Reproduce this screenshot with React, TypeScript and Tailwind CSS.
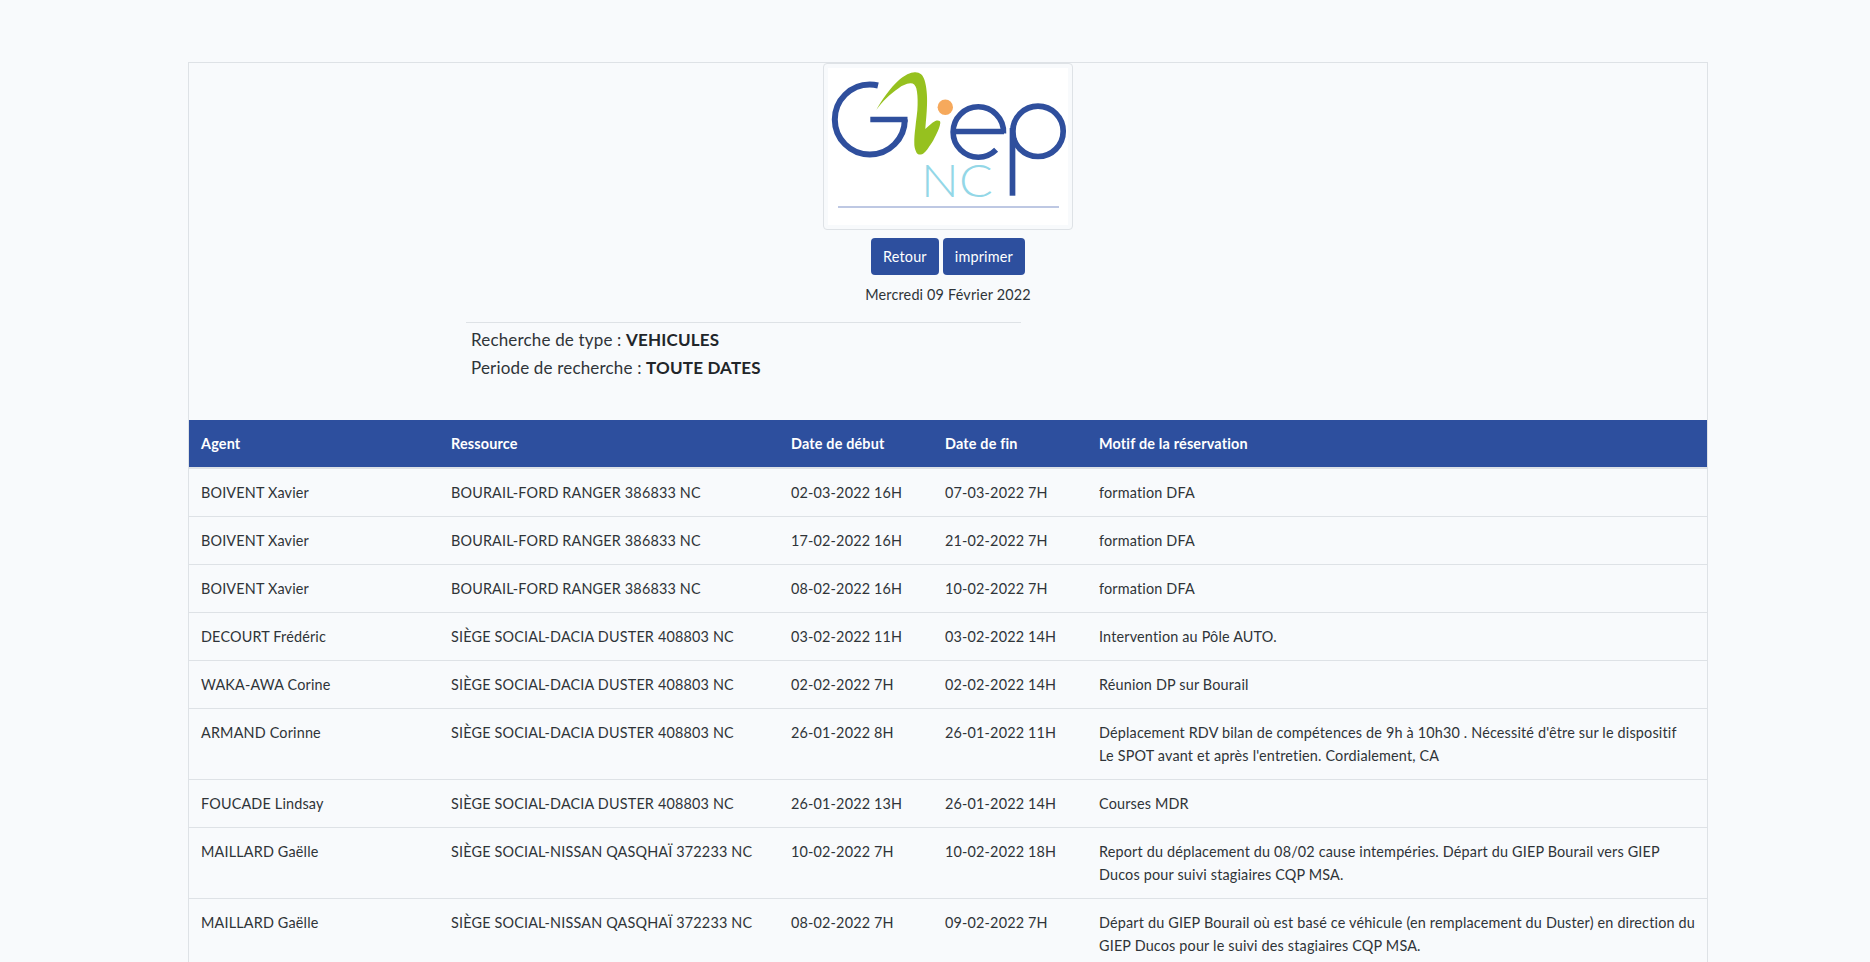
const rows = [
  { agent: "BOIVENT Xavier", res: "BOURAIL-FORD RANGER 386833 NC", start: "02-03-2022 16H", end: "07-03-2022 7H", motif: "formation DFA" },
  { agent: "BOIVENT Xavier", res: "BOURAIL-FORD RANGER 386833 NC", start: "17-02-2022 16H", end: "21-02-2022 7H", motif: "formation DFA" },
  { agent: "BOIVENT Xavier", res: "BOURAIL-FORD RANGER 386833 NC", start: "08-02-2022 16H", end: "10-02-2022 7H", motif: "formation DFA" },
  { agent: "DECOURT Frédéric", res: "SIÈGE SOCIAL-DACIA DUSTER 408803 NC", start: "03-02-2022 11H", end: "03-02-2022 14H", motif: "Intervention au Pôle AUTO." },
  { agent: "WAKA-AWA Corine", res: "SIÈGE SOCIAL-DACIA DUSTER 408803 NC", start: "02-02-2022 7H", end: "02-02-2022 14H", motif: "Réunion DP sur Bourail" },
  { agent: "ARMAND Corinne", res: "SIÈGE SOCIAL-DACIA DUSTER 408803 NC", start: "26-01-2022 8H", end: "26-01-2022 11H", motif: "Déplacement RDV bilan de compétences de 9h à 10h30 . Nécessité d'être sur le dispositif Le\u00a0SPOT avant et après l'entretien. Cordialement, CA" },
  { agent: "FOUCADE Lindsay", res: "SIÈGE SOCIAL-DACIA DUSTER 408803 NC", start: "26-01-2022 13H", end: "26-01-2022 14H", motif: "Courses MDR" },
  { agent: "MAILLARD Gaëlle", res: "SIÈGE SOCIAL-NISSAN QASQHAÏ 372233 NC", start: "10-02-2022 7H", end: "10-02-2022 18H", motif: "Report du déplacement du 08/02 cause intempéries. Départ du GIEP Bourail vers GIEP Ducos pour suivi stagiaires CQP MSA." },
  { agent: "MAILLARD Gaëlle", res: "SIÈGE SOCIAL-NISSAN QASQHAÏ 372233 NC", start: "08-02-2022 7H", end: "09-02-2022 7H", motif: "Départ du GIEP Bourail où est basé ce véhicule (en remplacement du Duster) en direction du GIEP Ducos pour le suivi des stagiaires CQP MSA." },
];

function Logo() {
  return (
    <svg width="240" height="157" viewBox="0 0 240 157" className="block bg-white" role="img" aria-label="GIEP NC">
      <g fill="none" stroke="#2f4f9d">
        {/* G */}
        <circle cx="41.8" cy="51.5" r="35" strokeWidth="6" strokeDasharray="173 220" />
        <line x1="42.3" y1="51.5" x2="79.5" y2="51.5" strokeWidth="5.6" />
        {/* e */}
        <circle cx="150.3" cy="64" r="25.2" strokeWidth="5.6" strokeDasharray="139 159" transform="rotate(45 150.3 64)" />
        <line x1="125" y1="63.5" x2="176" y2="63.5" strokeWidth="5.6" />
        {/* p */}
        <circle cx="210" cy="63.3" r="25.2" strokeWidth="5.7" />
        <line x1="184.5" y1="60" x2="184.5" y2="127.7" strokeWidth="5.7" />
      </g>
      <path
        d="M48.3 42 C53 33 62 20 71 12 C77 7 83 4 87.3 4.3 C92 4.5 95 7 96.5 12 C98.5 18 99.5 28 99 37 C98.8 45 98 52 97.3 61 C100 58.5 104 54.5 107.3 53 C110 52 112.6 52.5 112.3 55 C111.8 58.5 110.5 62 108 67 C106 71 104.5 74 102.3 77 C100 80.5 97 85 94 86.3 C91.5 87 89.2 86.5 88.3 84.3 C86.8 81 86.2 78 86.3 75.3 C86.2 70 86.7 65 87.3 60.3 C88 52 89.6 44 89.6 37 C89.8 30 89.4 25 88.3 20.3 C87.4 17 85 15 82.3 15.3 C78 15.8 74 17.5 70.6 20.3 C62 26 54 34 48.3 42 Z"
        fill="#96c11f"
      />
      <circle cx="117.3" cy="39.3" r="7.7" fill="#f6a95c" />
      <text x="93" y="128.5" fontFamily="Lato, sans-serif" fontWeight="300" fontSize="45.6" textLength="72" lengthAdjust="spacingAndGlyphs" fill="#93d7e7">
        NC
      </text>
      <line x1="10" y1="139" x2="231" y2="139" stroke="#a9b6da" strokeWidth="1.3" />
    </svg>
  );
}

export default function App() {
  return (
    <div className="h-[962px] overflow-hidden bg-[#f8fafc] pt-[62px] pl-[188px] pr-[162px] text-[14.4px] leading-[23px] tracking-[0.012em] text-[#2f3438] font-['Lato',sans-serif]">
      <div className="border border-[#dee2e6]">
        <div className="flex flex-col items-center">
          <div className="rounded border border-[#dee2e6] bg-[#f8fafc] p-1">
            <Logo />
          </div>
          <div className="mt-2 flex gap-1">
            <button className="h-[37px] rounded bg-[#2d4f9e] px-3 text-white">Retour</button>
            <button className="h-[37px] rounded bg-[#2d4f9e] px-3 text-white">imprimer</button>
          </div>
          <p className="mt-2">Mercredi 09 Février 2022</p>
        </div>
        <div className="ml-[277px] mt-4 w-[555px] border-t border-[#dee2e6] pl-[5px] pt-[3px] text-[17px] leading-[28px]">
          <p>Recherche de type : <b className="font-bold text-[#212529]">VEHICULES</b></p>
          <p>Periode de recherche : <b className="font-bold text-[#212529]">TOUTE DATES</b></p>
        </div>
        <table className="mt-[38px] w-full table-fixed border-collapse">
          <colgroup>
            <col className="w-[250px]" />
            <col className="w-[340px]" />
            <col className="w-[154px]" />
            <col className="w-[154px]" />
            <col />
          </colgroup>
          <thead>
            <tr className="border-b-2 border-[#dee2e6] bg-[#2d4f9e] text-left text-white">
              <th className="p-3 font-bold">Agent</th>
              <th className="p-3 font-bold">Ressource</th>
              <th className="p-3 font-bold">Date de début</th>
              <th className="p-3 font-bold">Date de fin</th>
              <th className="p-3 font-bold">Motif de la réservation</th>
            </tr>
          </thead>
          <tbody>
            {rows.map((row, i) => (
              <tr key={i} className="border-b border-[#dee2e6] align-top">
                <td className="p-3">{row.agent}</td>
                <td className="p-3">{row.res}</td>
                <td className="p-3">{row.start}</td>
                <td className="p-3">{row.end}</td>
                <td className="p-3">{row.motif}</td>
              </tr>
            ))}
          </tbody>
        </table>
      </div>
    </div>
  );
}
